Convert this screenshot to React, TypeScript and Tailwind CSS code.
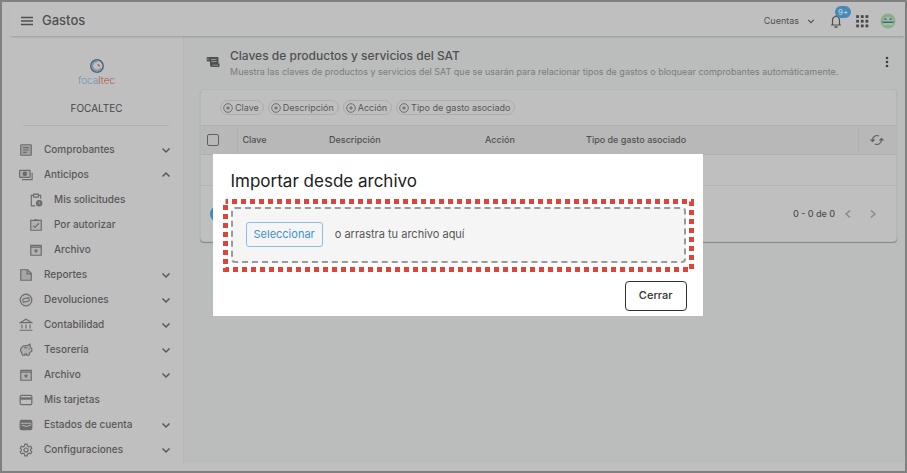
import type { ReactNode } from "react";

const family = "font-['Inter','Open_Sans',sans-serif]";

type IconName =
  | "receipt" | "cash" | "request" | "check" | "archive" | "report" | "refund"
  | "bank" | "piggy" | "card" | "wallet" | "gear";

const shapes: Record<IconName, ReactNode> = {
  receipt: (
    <>
      <rect x="3" y="3" width="18" height="18" rx="1" fill="#6c6c6c" fillOpacity=".35" />
      <path d="M7 8h10M7 12h10M7 16h6" />
    </>
  ),
  cash: (
    <>
      <rect x="1" y="4" width="18" height="12" rx="1" fill="#6c6c6c" fillOpacity=".2" />
      <circle cx="10" cy="10" r="3" fill="#6c6c6c" />
      <path d="M22.500 8v12H5" />
    </>
  ),
  request: (
    <>
      <path d="M11 22H4V4h4M16 4h4v6M8 2h8v5H8z" />
      <circle cx="17.500" cy="17.500" r="4.500" fill="#6c6c6c" />
      <path d="M17.500 15v3l2 1" stroke="#bfbfbf" strokeWidth="1.200" />
    </>
  ),
  check: (
    <>
      <path d="M3 4h18v17H3zM9 3h6" fill="#6c6c6c" fillOpacity=".15" />
      <path d="m7 13 3 3 7-7" />
    </>
  ),
  archive: (
    <>
      <path d="M3 4h18v17H3zM3 7h18" fill="#6c6c6c" fillOpacity=".15" />
      <path d="M12 10.500v6M9 13.500h6" strokeWidth="2.500" />
    </>
  ),
  report: (
    <>
      <path d="M3 3h12l6 6v12H3z" fill="#6c6c6c" fillOpacity=".3" />
      <path d="M14 3v7h7" />
    </>
  ),
  refund: (
    <>
      <circle cx="12" cy="12" r="10" fill="#6c6c6c" fillOpacity=".1" />
      <path d="M6 13c1-4 4-4 6-4h5l-2-2M18 11c-1 4-4 4-6 4H7l2 2" />
    </>
  ),
  bank: <path d="M2 8l10-6 10 6zM5 11v7M12 11v7M19 11v7M1 21h22" />,
  piggy: (
    <>
      <path d="M5 7c2-3 6-3 10-3l4-2v4l3 4v4l-3 2-2 5h-4v-2h-3v2H6l-2-5c-2-2-2-6 1-9z" fill="#6c6c6c" fillOpacity=".2" />
      <path d="M9 8h5" />
      <circle cx="17" cy="10" r="1.200" fill="#6c6c6c" stroke="none" />
    </>
  ),
  card: (
    <>
      <rect x="2" y="4" width="20" height="16" rx="2" />
      <path d="M2 9.500h20" strokeWidth="4" />
    </>
  ),
  wallet: (
    <>
      <rect x="2" y="4" width="20" height="16" rx="3" fill="#6c6c6c" />
      <path d="M3 9h18M5 12.500l9 2 7-3" stroke="#bfbfbf" strokeWidth="1.500" />
    </>
  ),
  gear: (
    <>
      <path d="m10 2-.6 3-2.500 1.500L4 5.500l-2 3.500 2.300 2v2L2 15l2 3.500 2.900-1L9.400 19l.6 3h4l.6-3 2.500-1.500 2.900 1L22 15l-2.300-2v-2L22 9l-2-3.500-2.900 1L14.600 5 14 2z" />
      <circle cx="12" cy="12" r="3.500" />
    </>
  ),
};

function MenuIcon({ name }: { name: IconName }) {
  return (
    <svg viewBox="0 0 24 24" className="size-3.5 shrink-0" fill="none" stroke="#6c6c6c" strokeWidth="2" aria-hidden="true">
      {shapes[name]}
    </svg>
  );
}

function Chevron({ d, className }: { d: string; className: string }) {
  return (
    <svg viewBox="0 0 10 10" className={className} fill="none" stroke="currentColor" strokeWidth="1.500" aria-hidden="true">
      <path d={d} />
    </svg>
  );
}

const DOWN = "M1.500 3.500 5 7l3.500-3.500";
const UP = "M1.500 6.500 5 3l3.500 3.500";

type Item = { icon: IconName; label: string; child?: boolean; arrow?: string };

const items: Item[] = [
  { icon: "receipt", label: "Comprobantes", arrow: DOWN },
  { icon: "cash", label: "Anticipos", arrow: UP },
  { icon: "request", label: "Mis solicitudes", child: true },
  { icon: "check", label: "Por autorizar", child: true },
  { icon: "archive", label: "Archivo", child: true },
  { icon: "report", label: "Reportes", arrow: DOWN },
  { icon: "refund", label: "Devoluciones", arrow: DOWN },
  { icon: "bank", label: "Contabilidad", arrow: DOWN },
  { icon: "piggy", label: "Tesorería", arrow: DOWN },
  { icon: "archive", label: "Archivo", arrow: DOWN },
  { icon: "card", label: "Mis tarjetas" },
  { icon: "wallet", label: "Estados de cuenta", arrow: DOWN },
  { icon: "gear", label: "Configuraciones", arrow: DOWN },
];

const filters = ["Clave", "Descripción", "Acción", "Tipo de gasto asociado"];

function TopBar() {
  return (
    <header className="relative ml-2 flex h-[34px] items-center pr-[9px] pl-2.5 shadow-[0_2px_2px_-1px_#00000030]">
      <button aria-label="Menú" className="mt-1">
        <svg viewBox="0 0 14 10" className="h-2.5 w-3.5" stroke="#505050" strokeWidth="1.300" aria-hidden="true">
          <path d="M1 1.500h12M1 5h12M1 8.500h12" />
        </svg>
      </button>
      <h1 className="mt-1 ml-2 text-[13px] font-medium text-[#505050]">Gastos</h1>
      <div className="mt-1 ml-auto flex items-center">
        <button className="flex items-center gap-2 text-[9px] text-[#505050]">
          Cuentas
          <Chevron d={DOWN} className="size-2" />
        </button>
        <button aria-label="Notificaciones" className="relative ml-3.5">
          <svg viewBox="0 0 14 14" className="size-3.5" fill="none" stroke="#505050" strokeWidth="1.200" aria-hidden="true">
            <path d="M2 11h10M3.500 11V6.500C3.500 4 5 2.500 7 2.500S10.500 4 10.500 6.500V11M7 1v1.500" />
            <path d="M5.500 13h3" strokeWidth="1.500" />
          </svg>
          <span className="absolute -top-2 left-1.5 rounded-full bg-[#4788b8] px-[3px] text-[8px] leading-3 text-[#c8d4dc]">9+</span>
        </button>
        <button aria-label="Aplicaciones" className="ml-3">
          <svg viewBox="0 0 12 12" className="size-3.5" fill="#484848" aria-hidden="true">
            {[1, 5, 9].map((y) => [1, 5, 9].map((x) => <rect key={`${x}-${y}`} x={x} y={y} width="2.400" height="2.400" />))}
          </svg>
        </button>
        <button aria-label="Perfil" className="ml-[11px]">
          <svg viewBox="0 0 16 16" className="size-4" aria-hidden="true">
            <circle cx="8" cy="8" r="7.500" fill="#8aad8c" />
            <path d="M3 6h3V4h4v2h3v6H3z" fill="#9dbcb4" />
            <path d="M2.500 8.500h11V10h-11zM4.500 5.500h2V7h-2zM9.500 5.500h2V7h-2z" fill="#4c6a5c" />
          </svg>
        </button>
      </div>
    </header>
  );
}

function Sidebar() {
  return (
    <nav className="w-[182px] shrink-0 border-r border-[#b5b7b6]">
      <div className="flex flex-col items-center pt-[22px] pl-2">
        <svg viewBox="0 0 16 16" className="size-4" fill="none" aria-hidden="true">
          <circle cx="8" cy="8" r="6.200" stroke="#5a6470" strokeWidth="1.500" />
          <path d="M9 3.500A4.500 4.500 0 1 0 12 10" stroke="#6f98ba" strokeWidth="1.500" />
          <path d="M8 6.500h2.500V9z" fill="#c0392f" />
        </svg>
        <p className="text-[10px] leading-3 font-light text-[#7095b8]">
          foca<span className="text-[#b8504c]">ltec</span>
        </p>
        <p className="mt-3.5 text-[10px] leading-4 text-[#484848]">FOCALTEC</p>
      </div>
      <hr className="mt-[9px] mr-3.5 mb-[11px] ml-[21px] border-[#b0b0b0]" />
      <ul>
        {items.map((item, i) => (
          <li key={i}>
            <a
              href="#"
              className={`flex h-[25px] items-center gap-[11px] pr-3 text-[10px] font-medium text-[#585858] ${item.child ? "pl-[27px]" : "pl-[17px]"}`}
            >
              <MenuIcon name={item.icon} />
              <span className="grow">{item.label}</span>
              {item.arrow && <Chevron d={item.arrow} className="size-2.5" />}
            </a>
          </li>
        ))}
      </ul>
    </nav>
  );
}

function Content() {
  return (
    <main className="min-w-0 grow bg-[#babdbc] pr-2 pl-4">
      <div className="flex items-center pt-2.5 pr-1">
        <svg viewBox="0 0 14 12" className="mx-1.5 h-3 w-3.5 shrink-0" aria-hidden="true">
          <path d="M1 1h10.500q1 0 1 1v5.500h1V10q0 1-1 1H6q-2 0-2-2V5.500H1Q0 3 1 1z" fill="#505050" />
          <path d="M5 3.500h5.500M5.500 5.500h5M6.500 9.200h5.500M2 2v2" stroke="#a4a7a6" strokeWidth=".8" />
        </svg>
        <div className="ml-1">
          <h2 className="text-xs leading-5 font-medium text-[#505050]">Claves de productos y servicios del SAT</h2>
          <p className="text-[9px] leading-3 text-[#7a7c7b]">
            Muestra las claves de productos y servicios del SAT que se usarán para relacionar tipos de gastos o bloquear comprobantes automáticamente.
          </p>
        </div>
        <button aria-label="Más opciones" className="ml-auto">
          <svg viewBox="0 0 4 12" className="mx-1 h-3 w-1" fill="#404040" aria-hidden="true">
            <circle cx="2" cy="2" r="1.300" /><circle cx="2" cy="6" r="1.300" /><circle cx="2" cy="10" r="1.300" />
          </svg>
        </button>
      </div>
      <section className="mt-[11px] rounded-sm border border-[#b5b6b6] bg-[#bfbfbf] shadow-[0_1px_1px_#00000048]">
        <div className="flex h-[35px] items-center gap-1 pl-[19px]">
          {filters.map((label) => (
            <button key={label} className="flex h-[15px] items-center gap-0.5 rounded-full border border-[#acacac] px-0.5 pr-1 text-[9px] text-[#585858]">
              <svg viewBox="0 0 10 10" className="size-2.5" fill="none" stroke="#585858" strokeWidth=".8" aria-hidden="true">
                <circle cx="5" cy="5" r="4.300" /><path d="M5 3v4M3 5h4" />
              </svg>
              {label}
            </button>
          ))}
        </div>
        <table className="w-full table-fixed text-left text-[9px] text-[#505050]">
          <thead>
            <tr className="h-[29px] border-y border-[#b0b0b0] bg-[#b8b8b8]">
              <th className="w-9 border-r border-[#b0b0b0] pl-1.5">
                <input type="checkbox" aria-label="Seleccionar todo" className="block size-3 appearance-none rounded-xs border border-[#606060]" />
              </th>
              <th className="w-[87px] pl-[5px] font-medium">Clave</th>
              <th className="w-[156px] pl-[5px] font-medium">Descripción</th>
              <th className="w-[101px] pl-[5px] font-medium">Acción</th>
              <th className="pl-[5px] font-medium">Tipo de gasto asociado</th>
              <th className="w-[38px] border-l border-[#b0b0b0]">
                <button aria-label="Actualizar" className="mx-auto block">
                  <svg viewBox="0 0 14 12" className="h-3 w-3.5" fill="none" stroke="#606060" strokeWidth="1.200" aria-hidden="true">
                    <path d="M2.500 7V6A4.500 4.500 0 0 1 9 2M11.500 5v1A4.500 4.500 0 0 1 5 10M.5 5.500l2 2 2-2M9.500 6.500l2-2 2 2" />
                  </svg>
                </button>
              </th>
            </tr>
          </thead>
          <tbody>
            <tr className="h-[31px] border-b border-[#b4b4b4]"><td colSpan={6} /></tr>
          </tbody>
        </table>
        <div className="flex h-[55px] items-center pr-[18px] pl-[9px] text-[9px] font-medium text-[#505050]">
          <button aria-label="Agregar" className="size-4 rounded-full bg-[#4788b8]" />
          <span className="ml-auto">0 - 0 de 0</span>
          <button aria-label="Página anterior" className="ml-2 text-[#888888]"><Chevron d="M7 1.500 3 5l4 3.500" className="size-2.5" /></button>
          <button aria-label="Página siguiente" className="ml-[15px] text-[#888888]"><Chevron d="m3 1.500 4 3.500-4 3.500" className="size-2.5" /></button>
        </div>
      </section>
    </main>
  );
}

function ImportDialog() {
  return (
    <div className="absolute inset-0 flex items-center justify-center pb-1 pl-2">
      <div role="dialog" aria-labelledby="import-title" className="w-[490px] bg-white px-2.5 pt-[15px] pb-[5px]">
        <h2 id="import-title" className="pl-2 text-[17px] leading-6 font-normal text-[#202020]">Importar desde archivo</h2>
        <div className="relative mt-1.5 p-2 pr-[7px]">
          <svg className="absolute top-0.5 left-0.5 h-[calc(100%-4px)] w-[calc(100%-4px)] overflow-visible" fill="none" stroke="#e04338" strokeWidth="5" aria-hidden="true">
            <rect x=".5" y=".5" width="100%" height="100%" strokeDasharray="5 4" strokeDashoffset="2.500" />
          </svg>
          <div className="relative flex h-14 items-center gap-3 rounded-sm border-2 border-dashed border-[#9a9a9a] bg-[#f5f5f5] pl-[13px]">
            <button className="h-[25px] rounded-[3px] border border-[#8dbce4] px-[7px] text-[11px] text-[#3f91d2]">Seleccionar</button>
            <p className="text-[11px] text-[#555555]">o arrastra tu archivo aquí</p>
          </div>
        </div>
        <div className="mt-2.5 flex justify-end pr-1.5">
          <button className="h-[30px] rounded-sm border border-[#303030] px-[13px] text-[11px] font-medium text-[#303030]">Cerrar</button>
        </div>
      </div>
    </div>
  );
}

export default function App() {
  return (
    <div className={`relative flex min-h-screen flex-col border-2 border-[#808080] bg-[#bfbfbf] pb-2 ${family}`}>
      <TopBar />
      <div className="flex grow">
        <Sidebar />
        <Content />
      </div>
      <ImportDialog />
    </div>
  );
}
